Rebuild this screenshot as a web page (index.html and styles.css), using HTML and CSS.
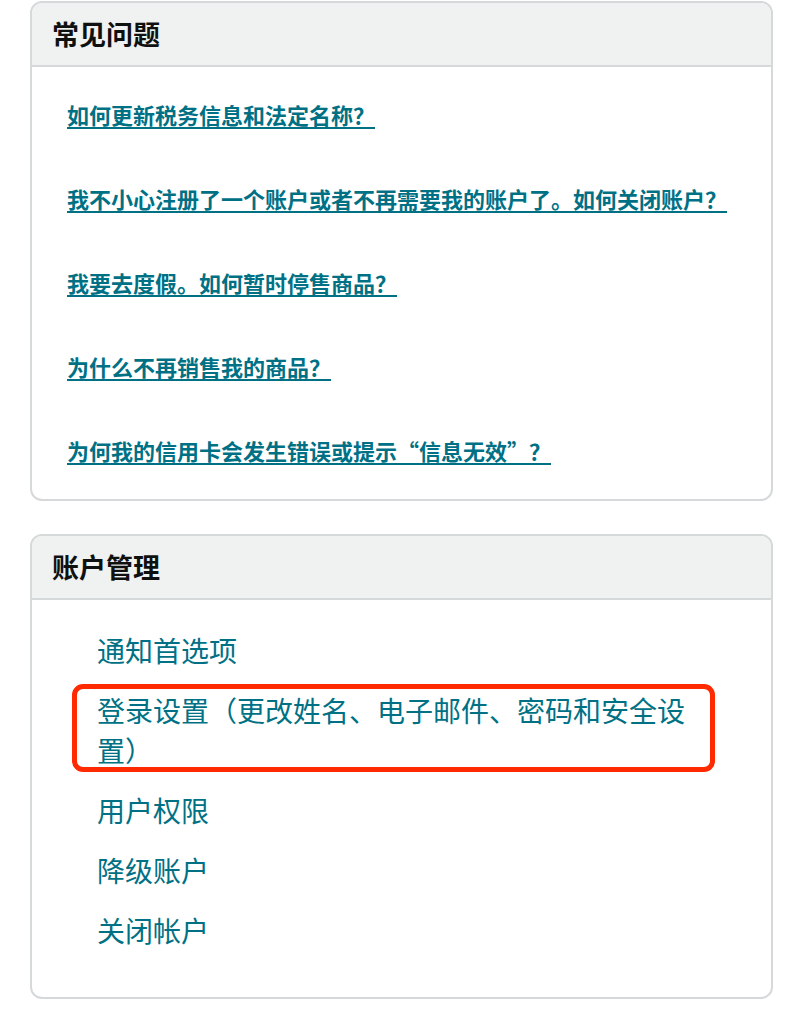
FILE: index.html
```html
<!DOCTYPE html>
<html lang="zh-CN">
<head>
<meta charset="utf-8">
<title>帮助</title>
<link rel="stylesheet" href="styles.css">
</head>
<body>
<div class="page">
  <section class="card">
    <div class="card-head"><h2 class="card-title">常见问题</h2></div>
    <ul class="faq-list">
      <li><a class="faq-link" href="#">如何更新税务信息和法定名称？</a></li>
      <li><a class="faq-link" href="#">我不小心注册了一个账户或者不再需要我的账户了。如何关闭账户？</a></li>
      <li><a class="faq-link" href="#">我要去度假。如何暂时停售商品？</a></li>
      <li><a class="faq-link" href="#">为什么不再销售我的商品？</a></li>
      <li><a class="faq-link" href="#">为何我的信用卡会发生错误或提示“信息无效”？</a></li>
    </ul>
  </section>
  <section class="card">
    <div class="card-head"><h2 class="card-title">账户管理</h2></div>
    <ul class="acct-list">
      <li><a class="acct-link" href="#">通知首选项</a></li>
      <li class="highlight"><a class="acct-link" href="#">登录设置（更改姓名、电子邮件、密码和安全设置）</a></li>
      <li><a class="acct-link" href="#">用户权限</a></li>
      <li><a class="acct-link" href="#">降级账户</a></li>
      <li><a class="acct-link" href="#">关闭帐户</a></li>
    </ul>
  </section>
</div>
</body>
</html>
```

FILE: styles.css
```css
html, body {
  margin: 0;
  padding: 0;
  background: #ffffff;
}
body {
  font-family: "Noto Sans CJK SC", "Noto Sans", sans-serif;
  color: #0f1111;
}
.page {
  padding: 1px 23px 0 30px;
  display: flex;
  flex-direction: column;
  gap: 33px;
}
.card {
  border: 2px solid #d5d9d9;
  border-radius: 12px;
  overflow: hidden;
  background: #ffffff;
}
.card-head {
  background: #f0f2f2;
  border-bottom: 2px solid #d5d9d9;
  height: 62px;
  padding-left: 20px;
  display: flex;
  align-items: center;
}
.card-title {
  margin: 0;
  font-size: 27px;
  line-height: 62px;
  font-weight: 700;
  color: #0f1111;
}
.faq-list {
  list-style: none;
  margin: 0;
  padding: 32px 20px 34px 35px;
  display: flex;
  flex-direction: column;
  gap: 54px;
}
.faq-list li {
  font-size: 22px;
  line-height: 30px;
}
.faq-link {
  font-weight: 700;
  color: #007185;
  text-decoration: underline;
  text-decoration-thickness: 2px;
  text-underline-offset: 3px;
}
.acct-list {
  list-style: none;
  margin: 0;
  padding: 30px 74px 47px 65px;
  display: flex;
  flex-direction: column;
  gap: 20px;
}
.acct-list li {
  line-height: 40px;
  font-size: 28px;
}
.acct-link {
  color: #007185;
  text-decoration: none;
}
.highlight {
  position: relative;
}
.highlight::after {
  content: "";
  position: absolute;
  left: -25px;
  right: -18px;
  top: -6px;
  bottom: -2px;
  border: 5px solid #ff2a00;
  border-radius: 11px;
  pointer-events: none;
}
```
